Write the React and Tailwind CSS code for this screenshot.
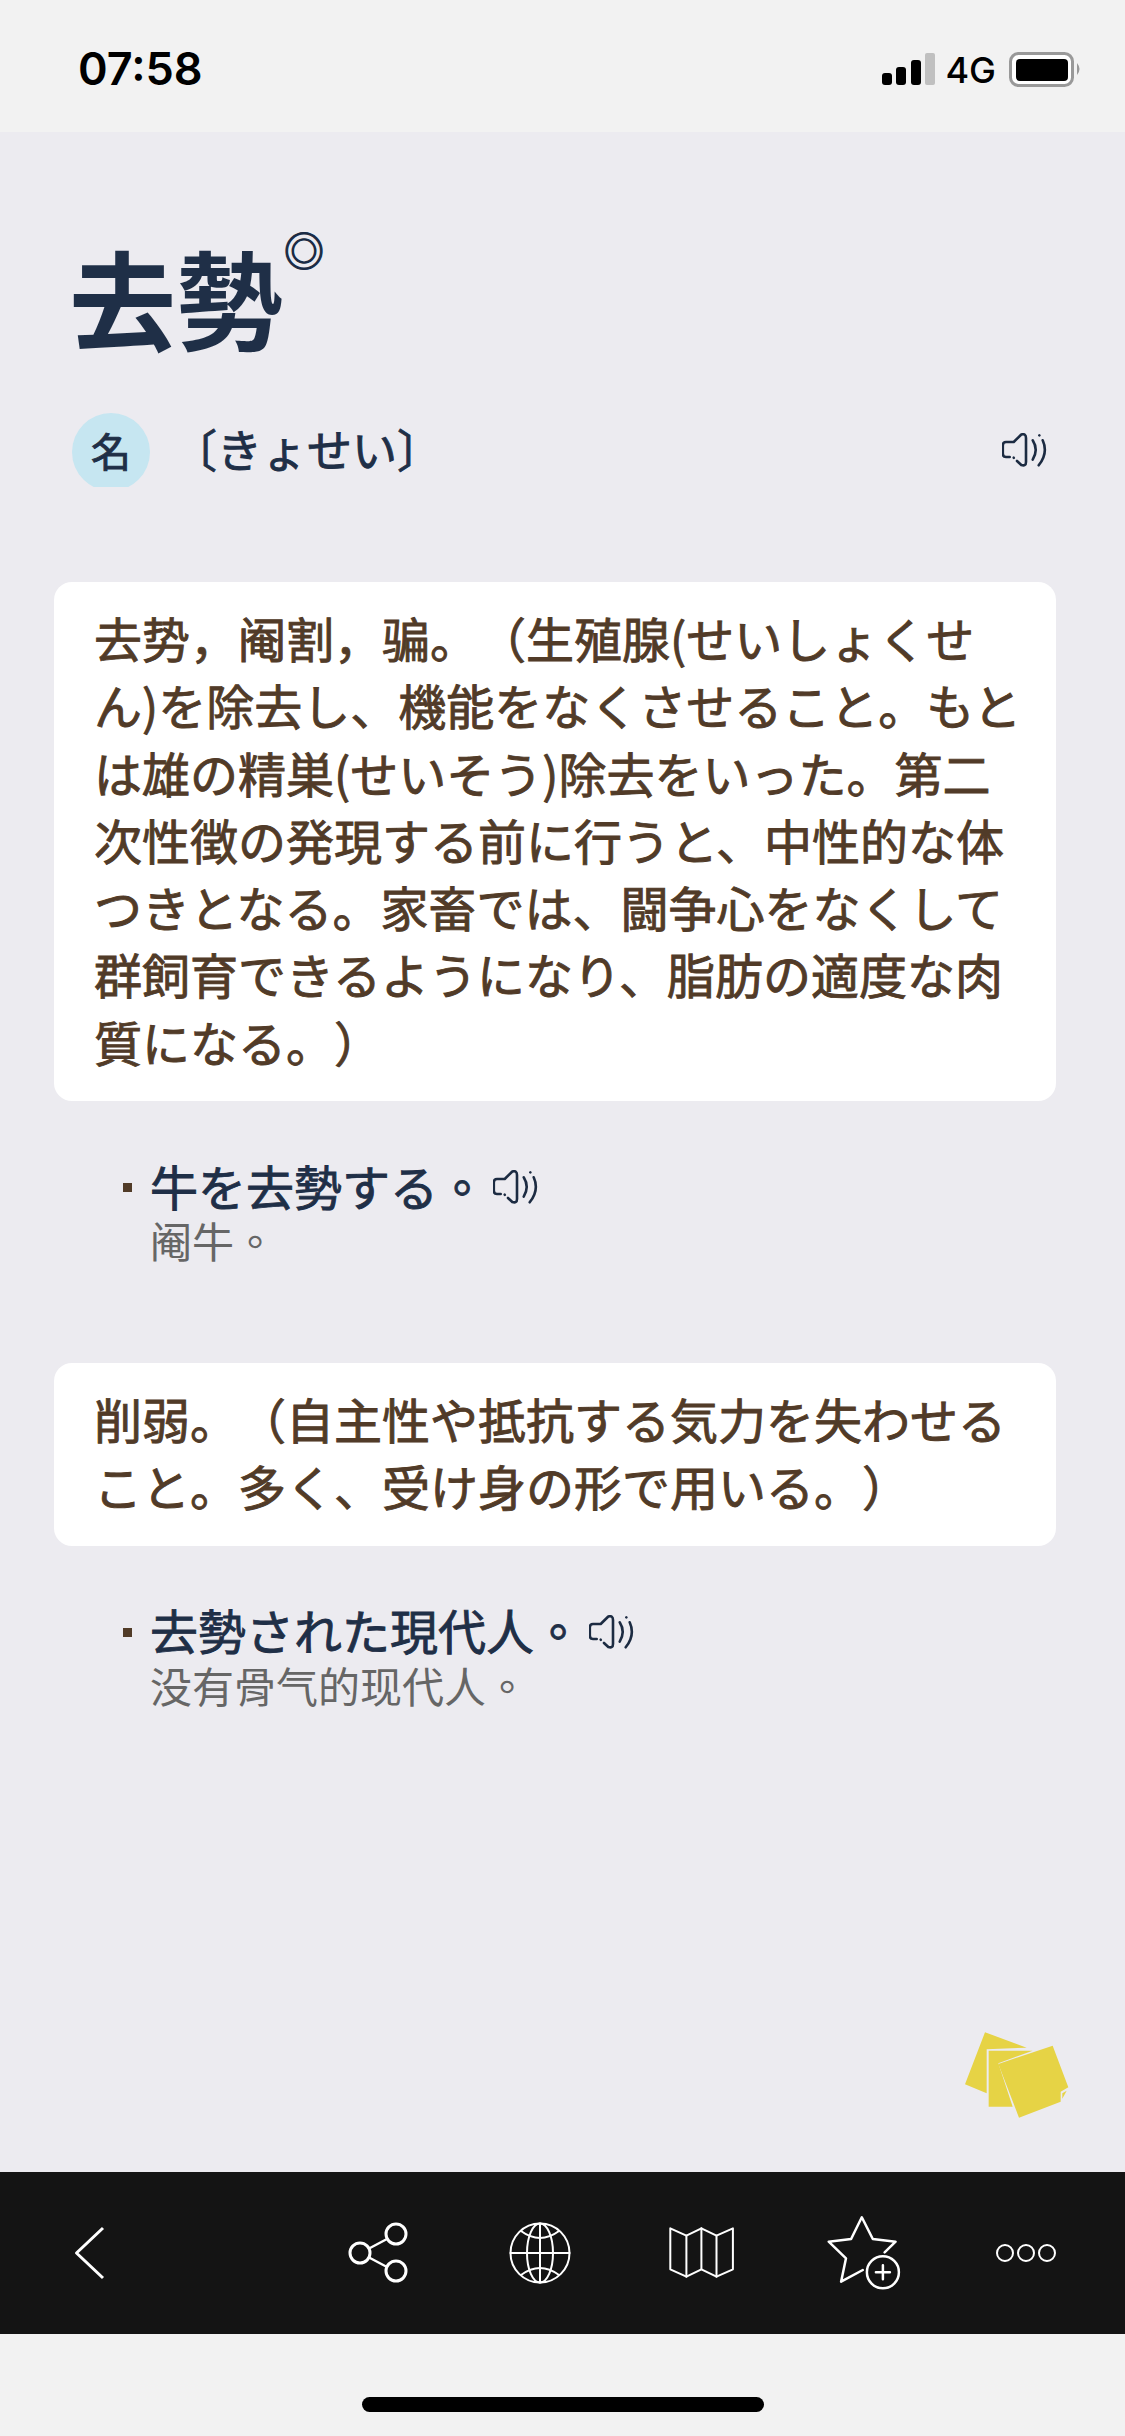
import React from 'react';

const sc = { fontFamily: '"Noto Sans CJK SC", sans-serif' };

const firstCard = [
    'ん)を除去し、機能をなくさせること。もと',
    'は雄の精巣(せいそう)除去をいった。第二',
    '次性徴の発現する前に行うと、中性的な体',
    'つきとなる。家畜では、闘争心をなくして',
    '群飼育できるようになり、脂肪の適度な肉',
    '質になる。）',
];

const secondCard = [
    '削弱。（自主性や抵抗する気力を失わせる',
    'こと。多く、受け身の形で用いる。）',
];

const Speaker = () => (
    <svg width="46" height="34" viewBox="0 0 46 34" fill="none" stroke="#1c2b42" strokeWidth="2.6" strokeLinecap="round" strokeLinejoin="round" className="shrink-0">
        <path d="M15 28 L19.3 32 Q24 33.5 24 29 L24 5 Q24 0.2 19.3 1.5 L11.7 9 L4 9 Q0.8 9 0.8 12.5 L0.8 20.5 Q0.8 24 4 24 L7.7 24" />
        <path d="M11.7 24.7 L11.8 24.8" />
        <path d="M30.7 7.3 Q36.7 16.7 30.7 26.7" />
        <path d="M40.7 7.3 Q46.5 20 36.7 32.3" />
        <path d="M37.3 2.3 L37.4 2.4" />
    </svg>
);

const Example = ({ text, gloss }) => (
    <div className="mt-[60px] pl-[69px]">
        <div className="flex h-[54px] items-center text-[48px] leading-[54px] font-normal text-[#1f2f47] [-webkit-text-stroke:0.9px_#1f2f47]">
            <span className="mb-[1px] mr-[18px] h-[9px] w-[9px] bg-[#513b28]" />
            <span className="mb-[7px]">{text}</span>
            <span className="ml-[7px] mb-[2px]"><Speaker /></span>
        </div>
        <p className="mt-[-2px] pl-[27px] text-[42px] leading-[54px] text-[#666666]">{gloss}</p>
    </div>
);

const Card = ({ children }) => (
    <div className="rounded-[18px] bg-white pt-[22px] pb-[26px] pl-[40px] text-[48px] leading-[67.3px] font-normal whitespace-nowrap text-[#513b28] [-webkit-text-stroke:0.9px_#513b28]">
        {children}
    </div>
);

const BarIcon = ({ children }) => (
    <svg width="80" height="80" viewBox="-40 -40 80 80" fill="none" stroke="white" strokeWidth="2.5" strokeLinecap="round" strokeLinejoin="round">
        {children}
    </svg>
);

const App = () => {
    return (
        <div className="flex h-[2436px] w-[1125px] flex-col overflow-hidden bg-[#ecebf0] [text-spacing-trim:space-all]" style={{ fontFamily: '"Noto Sans CJK JP", sans-serif' }}>
            {/* Status bar */}
            <div className="flex h-[132px] shrink-0 items-start justify-between bg-[#f2f2f2] pt-[45px] pl-[78px]" style={{ fontFamily: 'Inter, sans-serif' }}>
                <span className="text-[45px] leading-[48px] font-semibold text-black">07:58</span>
                <div className="flex items-start">
                    <svg width="54" height="34" viewBox="0 0 54 34" className="mt-[8px]">
                        <rect x="0" y="20" width="10" height="12" rx="3" fill="black" />
                        <rect x="14" y="14" width="10" height="18" rx="3" fill="black" />
                        <rect x="29" y="7" width="10" height="25" rx="3" fill="black" />
                        <rect x="43" y="0" width="10" height="32" rx="2" fill="#c0c0c0" />
                    </svg>
                    <span className="mt-[2px] ml-[9px] text-[36px] leading-[46px] font-medium text-black">4G</span>
                    <svg width="74" height="36" viewBox="0 0 74 36" className="mt-[7px] mr-[42px] ml-[13px]">
                        <rect x="1.5" y="1.5" width="62" height="32" rx="8" fill="white" stroke="#999999" strokeWidth="3" />
                        <rect x="7" y="7" width="52" height="22" rx="4" fill="black" />
                        <path d="M68 11 Q73 17 68 23 Z" fill="#999999" />
                    </svg>
                </div>
            </div>

            {/* Entry */}
            <main className="relative flex-1 pr-[69px] pl-[54px]">
                <div className="flex items-start pt-[110px] pl-[15px]">
                    <h1 className="text-[107px] leading-[107px] font-bold text-[#1f2f47]">去勢</h1>
                    <span className="mt-[-13px] ml-[1px] text-[40px] leading-[40px] text-[#1a2b45] [-webkit-text-stroke:1.2px_#1a2b45]">◎</span>
                </div>

                <div className="mt-[64px] flex h-[74px] items-center pl-[18px]">
                    <div className="h-[74px] w-[78px] overflow-hidden">
                        <div className="flex h-[78px] w-[78px] items-center justify-center rounded-full bg-[#c6e6f1] pb-[4px] text-[40px] leading-none text-[#1f2f47] [-webkit-text-stroke:0.9px_#1f2f47]">名</div>
                    </div>
                    <span className="mb-[3px] ml-[22px] text-[45px] leading-none text-[#1f2f47] [-webkit-text-stroke:0.9px_#1f2f47]">〔きょせい〕</span>
                    <span className="ml-auto mr-[8px]"><Speaker /></span>
                </div>

                <div className="mt-[95px]">
                    <Card>
                        <div><span style={sc}>去势，阉割，骗。（</span>生殖腺(せいしょくせ</div>
                        {firstCard.map(line => <div key={line}>{line}</div>)}
                    </Card>
                </div>

                <div style={{ fontFamily: '"Noto Sans CJK TC", sans-serif' }}>
                    <Example text="牛を去勢する。" gloss="阉牛。" />
                </div>

                <div className="mt-[96px]">
                    <Card>
                        {secondCard.map(line => <div key={line}>{line}</div>)}
                    </Card>
                </div>

                <div style={{ fontFamily: '"Noto Sans CJK TC", sans-serif' }}>
                    <Example text="去勢された現代人。" gloss="没有骨气的现代人。" />
                </div>

                {/* Sticky notes button */}
                <svg width="150" height="130" viewBox="0 0 450 390" className="absolute right-[35px] bottom-[32px]">
                    <polygon points="135,67 260,113 140,118 140,250 75,223" fill="#e6d345" />
                    <polygon points="146,122 278,122 175,160 218,290 146,290" fill="#e6d345" />
                    <polygon points="175,162 338,107 385,232 362,245 362,275 237,323" fill="#e6d345" />
                    <polygon points="367,250 380,242 367,266" fill="#e6d345" />
                </svg>
            </main>

            {/* Bottom toolbar */}
            <div className="flex h-[162px] shrink-0 items-center justify-between bg-[#141414] pr-[18px] pl-[50px]">
                <BarIcon>
                    <path d="M13 -25 L-13.5 0 L13 25" strokeWidth="3" strokeLinecap="butt" />
                </BarIcon>
                <div className="flex">
                    <div className="flex w-[162px] justify-center">
                        <BarIcon>
                            <g strokeWidth="3">
                                <ellipse cx="-18" cy="0" rx="10" ry="10" />
                                <ellipse cx="18" cy="-19" rx="10" ry="10" />
                                <ellipse cx="18" cy="18" rx="10" ry="10" />
                                <path d="M-8 -5 L9 -14 M-8 5 L9 14" strokeWidth="2.5" />
                            </g>
                        </BarIcon>
                    </div>
                    <div className="flex w-[162px] justify-center">
                        <BarIcon>
                            <g strokeWidth="2">
                                <circle cx="0" cy="0" r="29.5" />
                                <ellipse cx="0" cy="0" rx="13" ry="29.5" />
                                <path d="M0 -29.5 L0 29.5 M-29.5 0 L29.5 0" />
                                <path d="M-19 -22 Q0 -8 19 -22 M-19 22 Q0 8 19 22" />
                            </g>
                        </BarIcon>
                    </div>
                    <div className="flex w-[162px] justify-center">
                        <BarIcon>
                            <g strokeWidth="2">
                                <path d="M-31.7 -24.7 L-15.6 -17.3 L-0.6 -24.7 L14.5 -17.3 L30.9 -24.7 L30.9 16.3 L14.5 23.7 L-0.6 16.3 L-15.6 23.7 L-31.7 16.3 Z" />
                                <path d="M-15.6 -17.3 L-15.6 23.7 M-0.6 -24.7 L-0.6 16.3 M14.5 -17.3 L14.5 23.7" />
                            </g>
                        </BarIcon>
                    </div>
                    <div className="flex w-[162px] justify-center">
                        <BarIcon>
                            <path d="M-1.2 17 L-22.9 28.7 L-18 5.3 L-35.3 -11.3 L-12.9 -14 L-2.2 -35.7 L8.8 -14 L31.6 -11.3 L20.6 -0.7" />
                            <circle cx="18.9" cy="19.3" r="16" />
                            <path d="M18.9 12.3 L18.9 26.3 M11.9 19.3 L25.9 19.3" />
                        </BarIcon>
                    </div>
                    <div className="flex w-[162px] justify-center">
                        <BarIcon>
                            <g strokeWidth="2">
                                <circle cx="-21" cy="0" r="8" />
                                <circle cx="0" cy="0" r="8" />
                                <circle cx="21" cy="0" r="8" />
                            </g>
                        </BarIcon>
                    </div>
                </div>
            </div>

            {/* Home indicator */}
            <div className="flex h-[102px] shrink-0 justify-center bg-[#f2f2f2] pt-[63px]">
                <div className="h-[15px] w-[402px] rounded-full bg-black" />
            </div>
        </div>
    );
};

export default App;
